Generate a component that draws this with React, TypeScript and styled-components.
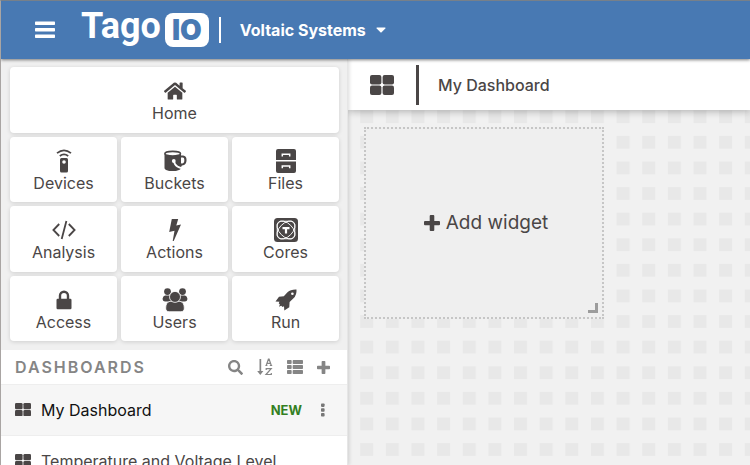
import React from "react";
import styled, { createGlobalStyle } from "styled-components";
import { FaHome, FaSearch, FaThList } from "react-icons/fa";

const GlobalStyle = createGlobalStyle`
  * { box-sizing: border-box; }
  html, body, #root { height: 100%; }
  body {
    margin: 0;
    overflow: hidden;
    font-family: Inter, "Liberation Sans", sans-serif;
    font-size: 16px;
    color: #4a4646;
    background: #f0f0f0;
  }
  button {
    font: inherit;
    color: inherit;
    background: none;
    border: 0;
    padding: 0;
    cursor: pointer;
  }
  a { color: inherit; text-decoration: none; }
  svg { display: block; flex: none; }
`;

const Page = styled.div`
  display: flex;
  flex-direction: column;
  height: 100vh;
  overflow: hidden;
  border-top: 1px solid #77808a;
  border-left: 1px solid #a9a5a3;
`;

const Header = styled.header`
  display: flex;
  align-items: center;
  flex: none;
  height: 58px;
  padding-left: 33px;
  color: #fff;
  background: #4879b3;
  box-shadow: 0 1px 3px rgba(0, 0, 0, 0.5);
  z-index: 3;
`;

const Logo = styled.a`
  display: flex;
  align-items: center;
  margin-left: 25px;
`;

const LogoName = styled.span`
  padding-bottom: 8px;
  font-family: Roboto, sans-serif;
  font-size: 36px;
  font-weight: 700;
  line-height: 44px;
`;

const LogoBadge = styled.span`
  display: flex;
  align-items: center;
  justify-content: center;
  width: 44px;
  height: 34px;
  margin-left: 4px;
  border-radius: 8px;
  font-size: 28px;
  font-weight: 900;
  line-height: 34px;
  color: #4879b3;
  background: #fff;
`;

const HeaderDivider = styled.span`
  width: 2px;
  height: 26px;
  margin: 0 19px 0 10px;
  background: #fff;
`;

const AccountButton = styled.button`
  display: flex;
  align-items: center;
  gap: 10px;
  font-weight: 700;
  line-height: 24px;
`;

const Body = styled.div`
  display: flex;
  flex: 1;
  min-height: 0;
`;

const Sidebar = styled.aside`
  display: flex;
  flex-direction: column;
  flex: none;
  width: 347px;
  background: #f0f0f0;
  border-right: 1px solid #e6e6e6;
  box-shadow: 1px 0 4px rgba(0, 0, 0, 0.15);
  overflow: hidden;
  z-index: 1;
`;

const TileGrid = styled.nav`
  display: grid;
  grid-template-columns: repeat(3, 1fr);
  grid-template-rows: 66px 65px 66px 65px;
  gap: 4px;
  padding: 8px 8px 9px 9px;
`;

const Tile = styled.a<{ $wide?: boolean }>`
  display: flex;
  flex-direction: column;
  align-items: center;
  grid-column: ${(p) => (p.$wide ? "1 / -1" : "auto")};
  padding-top: 12px;
  border-radius: 4px;
  line-height: 20px;
  background: #fff;
  box-shadow: 0 1px 4px rgba(0, 0, 0, 0.14);
`;

const TileIcon = styled.span`
  display: flex;
  align-items: center;
  justify-content: center;
  height: 24px;
`;

const ListHeader = styled.div`
  display: flex;
  align-items: center;
  flex: none;
  height: 34px;
  padding: 0 17px 0 14px;
  color: #858585;
  background: #fff;
`;

const ListTitle = styled.h2`
  flex: 1;
  margin: 0;
  font-size: 16px;
  font-weight: 600;
  letter-spacing: 2px;
  line-height: 24px;
`;

const Tools = styled.div`
  display: flex;
  align-items: center;
  gap: 14px;
`;

const DashboardRow = styled.div<{ $selected?: boolean }>`
  display: flex;
  align-items: center;
  flex: none;
  height: 51px;
  padding: 0 22px 0 14px;
  color: ${(p) => (p.$selected ? "#111" : "#4a4646")};
  background: ${(p) => (p.$selected ? "#f6f6f6" : "#fff")};
  box-shadow: inset 0 1px #eee;
`;

const DashboardLink = styled.a`
  display: flex;
  align-items: center;
  flex: 1;
  gap: 10px;
  line-height: 24px;
  white-space: nowrap;
`;

const NewTag = styled.span`
  margin-right: 19px;
  font-size: 13px;
  font-weight: 700;
  color: #337f22;
`;

const Main = styled.main`
  display: flex;
  flex-direction: column;
  flex: 1;
  min-width: 0;
  isolation: isolate;
`;

const Toolbar = styled.div`
  display: flex;
  align-items: center;
  flex: none;
  height: 51px;
  padding-left: 22px;
  background: #fff;
  box-shadow: 0 1px 8px rgba(0, 0, 0, 0.3);
  z-index: 1;
`;

const ToolbarDivider = styled.span`
  width: 3px;
  height: 40px;
  margin: 0 19px 0 22px;
  background: #4a4646;
`;

const ToolbarTitle = styled.h1`
  margin: 0;
  font-size: 16px;
  font-weight: 500;
  line-height: 24px;
`;

const Canvas = styled.section`
  position: relative;
  flex: 1;
  min-height: 0;
  padding: 17px 16px;
  background: #f1f1f1;
`;

const Texture = styled.svg`
  position: absolute;
  inset: 0;
  width: 100%;
  height: 100%;
`;

const AddWidget = styled.button`
  position: relative;
  display: flex;
  align-items: center;
  justify-content: center;
  gap: 6px;
  width: 240px;
  height: 192px;
  padding-left: 4px;
  font-size: 19px;
  line-height: 28px;
  background: #efefef;
  border: 2px dotted #c6c6c6;
`;

const ResizeCorner = styled.span`
  position: absolute;
  right: 4px;
  bottom: 4px;
  width: 10px;
  height: 10px;
  border: solid #9c9c9c;
  border-width: 0 3px 3px 0;
`;

const GridIcon = ({ size = 24 }: { size?: number }) => (
  <svg width={size} height={(size * 5) / 6} viewBox="0 0 24 20" fill="#4a4646" aria-hidden="true">
    <rect width="11.4" height="9.4" rx="2" />
    <rect x="12.6" width="11.4" height="9.4" rx="2" />
    <rect y="10.6" width="11.4" height="9.4" rx="2" />
    <rect x="12.6" y="10.6" width="11.4" height="9.4" rx="2" />
  </svg>
);

const MenuIcon = () => (
  <svg width="22" height="18" viewBox="0 0 22 18" fill="#fff" aria-hidden="true">
    <rect x="1" y="0.6" width="20" height="3.3" rx="0.7" />
    <rect x="1" y="7.1" width="20" height="3.3" rx="0.7" />
    <rect x="1" y="13.6" width="20" height="3.3" rx="0.7" />
  </svg>
);

const PlusIcon = ({ size }: { size: number }) => (
  <svg width={size} height={size} viewBox="0 0 16 16" fill="currentColor" aria-hidden="true">
    <path d="M6.7 0h2.6q1 0 1 1v4.9H15q1 0 1 1v2.4q0 1-1 1h-4.7V15q0 1-1 1H6.7q-1 0-1-1v-4.7H1q-1 0-1-1V6.900q0-1 1-1h4.700V1q0-1 1-1z" />
  </svg>
);

const DeviceIcon = () => (
  <svg width="16" height="24" viewBox="0 0 16 24" aria-hidden="true">
    <path d="M1 4.2Q8-1.5 15 4.2M3.8 7Q8 3.6 12.2 7" fill="none" stroke="#4a4646" strokeWidth="1.7" />
    <rect x="4" y="9" width="8" height="14.5" rx="1.5" fill="#4a4646" />
    <circle cx="8" cy="13" r="1.8" fill="#fff" />
  </svg>
);

const BucketIcon = () => (
  <svg width="24" height="22" viewBox="0 0 24 22" aria-hidden="true">
    <path d="M1.500 3.500v14.500c0 4 15.500 4.300 16.500 0V3.500z" fill="#4a4646" />
    <ellipse cx="9.700" cy="3.700" rx="7.800" ry="2.300" fill="#fff" stroke="#4a4646" strokeWidth="1.600" />
    <path d="M18 6.500h2q2.400.3 2.400 3v1.500q-.3 3.600-4.400 3.600" fill="none" stroke="#4a4646" strokeWidth="2.200" />
    <path d="M11 11l.8 2.800q1.800 3.200 6.700 4.400" fill="none" stroke="#fff" strokeWidth="1.800" />
    <circle cx="10.800" cy="11" r="1.900" fill="#fff" />
    <path d="M12.800 11.500l5 .8 1.200 4.200q-4.200-.6-5.600-3z" fill="#4a4646" />
  </svg>
);

const CabinetIcon = () => (
  <svg width="22" height="24" viewBox="0 0 22 24" aria-hidden="true">
    <path d="M3 0h16a2 2 0 0 1 2 2v9H1V2a2 2 0 0 1 2-2zM1 12.400h20V22a2 2 0 0 1-2 2H3a2 2 0 0 1-2-2z" fill="#4a4646" />
    <path d="M7.300 7.600V5.300h7.400v2.300M7.300 19.200v-2.300h7.400v2.300" fill="none" stroke="#fff" strokeWidth="1.500" />
  </svg>
);

const CodeIcon = () => (
  <svg width="24" height="20" viewBox="0 0 24 20" fill="none" stroke="#4a4646" strokeWidth="1.800" aria-hidden="true">
    <path d="M7.200 4L1.400 10l5.800 6M16.800 4l5.800 6-5.800 6M14.400 1L9.700 19" />
  </svg>
);

const BoltIcon = () => (
  <svg width="12" height="22" viewBox="0 0 12 22" fill="#4a4646" aria-hidden="true">
    <path d="M2.800 0h6.400L7.300 6.500l4.700-1L4.700 22h-1l1.800-10.200L.2 13z" />
  </svg>
);

const CoresIcon = () => (
  <svg width="24" height="24" viewBox="0 0 24 24" aria-hidden="true">
    <rect width="24" height="24" rx="3.500" fill="#4a4646" />
    <g fill="none" stroke="#fff" strokeWidth="0.900">
      <rect x="3.200" y="3.200" width="17.600" height="17.600" rx="4.500" />
      <ellipse cx="12" cy="12" rx="10.900" ry="6.600" transform="rotate(45 12 12)" />
      <ellipse cx="12" cy="12" rx="10.900" ry="6.600" transform="rotate(-45 12 12)" />
    </g>
    <path d="M8.500 9h7v2.200h-2.400v4.300h-2.200v-4.300H8.500z" fill="#fff" />
  </svg>
);

const LockIcon = () => (
  <svg width="16" height="20" viewBox="0 0 16 20" aria-hidden="true">
    <path d="M4 9.500V5.800a4 4 0 0 1 8 0v3.700" fill="none" stroke="#4a4646" strokeWidth="2.400" />
    <rect x="0.500" y="8.800" width="15" height="10.400" rx="1.200" fill="#4a4646" />
  </svg>
);

const UsersIcon = () => (
  <svg width="26" height="24" viewBox="0 0 26 24" fill="#4a4646" aria-hidden="true">
    <circle cx="5.500" cy="3.600" r="3.400" />
    <circle cx="20.500" cy="3.600" r="3.400" />
    <path d="M3 7.500h6v6H3.200Q.5 13.500.6 10.500 1 8 3 7.500zM23 7.500h-6v6h5.800q2.700 0 2.600-3Q25 8 23 7.500z" />
    <g stroke="#fff" strokeWidth="0.800">
      <path d="M8 13.300h10c3 .5 4.300 3.500 4.300 6.800 0 2.400-1.300 3.600-3.400 3.600H7.100c-2.100 0-3.400-1.200-3.400-3.600 0-3.300 1.300-6.300 4.300-6.800z" />
      <circle cx="13" cy="8.900" r="5.500" />
    </g>
  </svg>
);

const RocketIcon = () => (
  <svg width="22" height="22" viewBox="0 0 22 22" aria-hidden="true">
    <path d="M21.500.5Q15.800.2 12.500 3.300L8.800 7.300 4 7.700.5 12.500l4 .2-.8 1.500 1.200 1.200-1 2.300 2.300-1 1.400 1.300 1.400-.8.3 4.300 5-3.200.3-5.300 3.900-3.700Q21.900 6 21.500.5z" fill="#4a4646" />
    <circle cx="17.400" cy="4.700" r="1.300" fill="#fff" />
  </svg>
);

const SortIcon = () => (
  <svg width="16" height="18" viewBox="0 0 16 18" fill="#858585" aria-hidden="true">
    <path d="M2.500 1h1.700v12h2.200L3.300 17 .2 13h2.300z" />
    <path d="M8.400 7.500h2M12.800 7.500h2.400M9.200 7.500l2.200-6.300h.7l2.200 6.300M10 5.300h3.500M9.200 12v-1.300h5L9 16.500h5.300v-1.600" fill="none" stroke="#858585" strokeWidth="1.200" />
  </svg>
);

const CaretIcon = () => (
  <svg width="10" height="6" viewBox="0 0 10 6" fill="#fff" aria-hidden="true">
    <path d="M1 .5h8q.8.2.3.9L5.600 5.200q-.6.5-1.200 0L.7 1.400Q.2.7 1 .5z" />
  </svg>
);

const DotsIcon = () => (
  <svg width="4" height="14" viewBox="0 0 4 14" fill="#777" aria-hidden="true">
    <rect y="0.500" width="3.600" height="3.400" rx="0.800" />
    <rect y="5.300" width="3.600" height="3.400" rx="0.800" />
    <rect y="10.100" width="3.600" height="3.400" rx="0.800" />
  </svg>
);

const tiles = [
  { label: "Home", icon: <FaHome size={22} />, wide: true },
  { label: "Devices", icon: <DeviceIcon /> },
  { label: "Buckets", icon: <BucketIcon /> },
  { label: "Files", icon: <CabinetIcon /> },
  { label: "Analysis", icon: <CodeIcon /> },
  { label: "Actions", icon: <BoltIcon /> },
  { label: "Cores", icon: <CoresIcon /> },
  { label: "Access", icon: <LockIcon /> },
  { label: "Users", icon: <UsersIcon /> },
  { label: "Run", icon: <RocketIcon /> },
];

export default function App() {
  return (
    <>
      <GlobalStyle />
      <Page>
        <Header>
          <button aria-label="Menu"><MenuIcon /></button>
          <Logo href="#">
            <LogoName>Tago</LogoName>
            <LogoBadge>IO</LogoBadge>
          </Logo>
          <HeaderDivider />
          <AccountButton>Voltaic Systems<CaretIcon /></AccountButton>
        </Header>
        <Body>
          <Sidebar>
            <TileGrid>
              {tiles.map((tile) => (
                <Tile key={tile.label} href="#" $wide={tile.wide}>
                  <TileIcon>{tile.icon}</TileIcon>
                  {tile.label}
                </Tile>
              ))}
            </TileGrid>
            <ListHeader>
              <ListTitle>DASHBOARDS</ListTitle>
              <Tools>
                <button aria-label="Search"><FaSearch size={15} /></button>
                <button aria-label="Sort"><SortIcon /></button>
                <button aria-label="List view"><FaThList size={16} /></button>
                <button aria-label="Add dashboard"><PlusIcon size={13} /></button>
              </Tools>
            </ListHeader>
            <DashboardRow $selected>
              <DashboardLink href="#"><GridIcon size={16} />My Dashboard</DashboardLink>
              <NewTag>NEW</NewTag>
              <button aria-label="Dashboard options"><DotsIcon /></button>
            </DashboardRow>
            <DashboardRow>
              <DashboardLink href="#"><GridIcon size={16} />Temperature and Voltage Level</DashboardLink>
            </DashboardRow>
          </Sidebar>
          <Main>
            <Toolbar>
              <GridIcon />
              <ToolbarDivider />
              <ToolbarTitle>My Dashboard</ToolbarTitle>
            </Toolbar>
            <Canvas>
              <Texture aria-hidden="true">
                <defs>
                  <pattern id="squares" x="12.2" y="0.3" width="25.64" height="25.6" patternUnits="userSpaceOnUse">
                    <rect width="13" height="12.8" fill="#e8e8e8" />
                  </pattern>
                </defs>
                <rect width="100%" height="100%" fill="url(#squares)" />
              </Texture>
              <AddWidget>
                <PlusIcon size={16} />Add widget
                <ResizeCorner />
              </AddWidget>
            </Canvas>
          </Main>
        </Body>
      </Page>
    </>
  );
}
